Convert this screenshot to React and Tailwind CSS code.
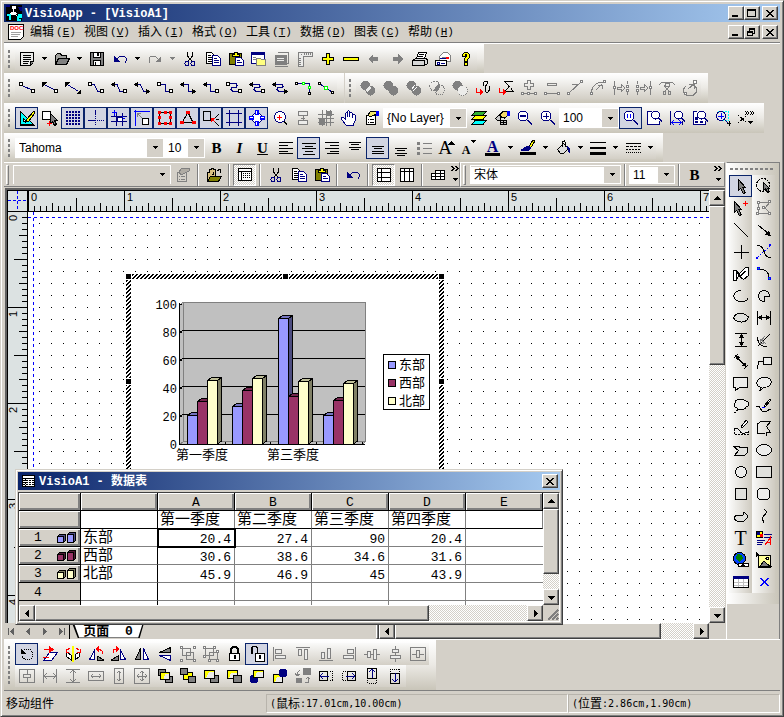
import { useState } from 'react';
import clsx from 'clsx';

const K = '#000';
const W = '#fff';
const N = '#000080';
const B = '#0000ff';
const R = '#ff0000';
const Y = '#ffff00';
const G = '#808080';
const L = '#ececea';
const C = '#00ffff';

const circle = (x, y, r) => `M${x - r} ${y}a${r} ${r} 0 1 0 ${2 * r} 0a${r} ${r} 0 1 0 ${-2 * r} 0z`;

const sqStart = ['M.5 2.5h3v3h-3z', K, W];
const sqEnd = ['M12.5 9.5h3v3h-3z', K, W];
const arrStart = ['M0 4.5l4-3v6z', 'none', K];
const arrEnd = ['M16 11.5l-4-3v6z', 'none', K];
const lens = [circle(9.5, 5, 4), N, W];
const lensArm = ['M12 8l4 4M13 8l3 3', N];

// every icon is a list of [path, stroke, fill, dash] on a 16 x 16 grid
const icons = {
  new: [['M1.5 1.5h13v9l-3 4h-10z', K, L], ['M4 4.5h8M4 6.5h8M4 8.5h8M4 10.5h6M4 12.5h5'], ['M11.5 14.5v-4h3', K, G]],
  open: [['M1.5 13.5v-9l2-2h3l1 2h5v3', K, '#a0a09c'], ['M1.5 13.5l3-6h11l-3 6z', K, G]],
  save: [['M1.5 1.5h13v13h-13z', K, G], ['M4.5 1.5h7v5h-7z', K, W], ['M4.5 9.5h7v5h-7z', K, W], ['M8 2h2v3h-2z', 'none', K], ['M6 11h1v3h-1z', 'none', K]],
  undo: [['M4 9l3-3 2-1h3l2 2v3l-1 2', N], ['M2 5v6h6z', 'none', N]],
  redo: [['M12 9l-3-3-2-1h-3l-2 2v3l1 2', G], ['M14 5v6h-6z', 'none', G]],
  cut: [['M5.5 1v4l5 6M10.5 1v4l-5 6', K], [circle(5, 12.5, 2), N], [circle(11, 12.5, 2), N]],
  copy: [['M1.5 1.5h5l3 3v8h-8z', K, W], ['M3 4.5h3M3 6.5h4M3 8.5h4M3 10.5h4'], ['M7.5 4.5h5l3 3v7h-8z', N, W], ['M9 7.5h3M9 9.5h5M9 11.5h5', N]],
  paste: [['M1.5 2.5h12v11h-12z', K, '#808000'], ['M4.5 5.5v-2h2v-2h3v2h2v2z', K, Y], ['M7.5 6.5h5l3 3v5h-8z', N, W], ['M9 9.5h3M9 11.5h5', N]],
  folderWin: [['M.5 1.5h13v11h-13z', N, W], ['M1 1h13v3h-13z', 'none', N], ['M2 6h3v1h-3zM2 8h3v1h-3z', 'none', G], ['M5.5 14.5v-7h4l1 1h4v6z', G, '#ffff80']],
  stamp: [['M3.5 1.5h11v11h-2', G], ['M1.5 4.5h11v9h-11z', G, G], ['M3 7.5h7M3 9.5h7', L], ['M1 15.5h13', G]],
  ruler: [['M1.5 15.5v-14h14v4h-9v10z', G, L], ['M4 3.5h1M7.5 2v2M9.5 2v2M11.5 2v2M13.5 2v2M2 7.5h2M2 9.5h2M2 11.5h2M2 13.5h2', G]],
  plus: [['M6.5 2.5h3v4h4v3h-4v4h-3v-4h-4v-3h4z', K, Y]],
  minus: [['M.5 6.5h15v3h-15z', K, Y]],
  left: [['M2 8l5-5v3h5v4h-5v3z', 'none', G]],
  right: [['M14 8l-5-5v3h-5v4h5v3z', 'none', G]],
  print: [['M4.5 7.5l2-6h8l-2 6z', K, W], ['M.5 9.5l3-2h11l1 2v3l-3 2h-12z', K, '#d8d8d8'], ['M.5 9.5h12v5M7 3.5h5M6 5.5h5', K]],
  mail: [['M4.5 9.5v-4l4-4h4l3 3v6h-5', G, W], ['M7 6.5h7', G], ['M11 6h3v2h-3z', 'none', R], ['M5 7.5h6', N], ['M.5 9.5h11v5h-11z', K, W], ['M2 11h2v2h-2zM6 12.5h4', N]],
  help: [['M4.5 5.5v-2l2-2h3l2 2v3l-2 2v2h-3v-3l2-2v-2h-1v2z', K, Y], ['M6.5 11.5h3v3h-3z', K, Y]],

  c1: [['M4 6l9 4', N], sqStart, sqEnd],
  c2: [['M3 5l10 5', N], ['M0 2h5l-5 5z', 'none', K], sqEnd],
  c3: [['M3 5l10 6', N], ['M0 2h5l-5 5z', 'none', K], ['M16 14v-5l-5 5z', 'none', K]],
  c4: [['M4 4.5h2l4 7h2', N], sqStart, sqEnd],
  c5: [['M4 4.5h2l3 7h3', N], arrStart, sqEnd],
  c6: [['M4 4.5h2l4 7h2', N], arrStart, arrEnd],
  c7: [['M4 4.5h4.5v7h4', N], sqStart, sqEnd],
  c8: [['M4 4.5h4.5v7h4', N], arrStart, arrEnd],
  c9: [['M4 4.5h3.5v7h5', N], arrStart, sqEnd],
  c10: [['M4 3.5h6l1 2-1 2h-4l-1 2 2 2h5', N], sqStart, sqEnd],
  c11: [['M4 4.5h6l1 2-1 1h-4l-1 2 2 2h5', N], arrStart, sqEnd],
  c12: [['M4 4.5h6l1 2-1 1h-4l-1 2 2 2h5', N], arrStart, arrEnd],
  c13: [['M2 3.5h12.5v9', N], ['M.5 2.5h2v2h-2zM13.5 12.5h2v2h-2z', K, W], ['M7.5 2.5h2v2h-2zM13.5 6.5h2v2h-2z', '#00ff00', W]],
  c14: [['M2 4l12 8', N], ['M.5 2.5h2v2h-2zM13.5 11.5h2v2h-2z', K, W], ['M6.5 6.5h3v3h-3z', '#00ff00', W]],

  xor: [[circle(5.5, 5.5, 5), 'none', G], [circle(10.5, 10.5, 5), 'none', G], ['M6 10l4-5 1 4-4 3z', 'none', L]],
  union: [[circle(5.5, 5.5, 5), 'none', G], [circle(10.5, 10.5, 5), 'none', G]],
  meet: [[circle(5.5, 5.5, 5), 'none', G], [circle(10.5, 10.5, 5), 'none', G], ['M6 9l3-4M7 11l4-4', W]],
  common: [[circle(5.5, 6, 5), G, 'none', '1 1'], [circle(10.5, 10, 5), G, 'none', '1 1'], ['M6 11v-4l3-3 2 2-1 4-3 2z', 'none', G]],
  subtract: [[circle(5.5, 5.5, 5), 'none', G], [circle(10.5, 10.5, 5), G, L, '1 1']],
  curveIn: [['M8 5.5V3l2-2h2l1 2-3 4v3l1 2h2l2-3-1-3', K], ['M1.5 8v4h4', R], ['M5 9l3 3-3 4z', 'none', R]],
  polyIn: [['M15 1.5h-8l4 5-4 5h8l-2-3', K], ['M1.5 8v4h4', R], ['M5 9l3 3-3 4z', 'none', R]],
  addPt: [['M6.5.5h3v3h3v3h-3v3h-3v-3h-3v-3h3z', G], ['M1 13.5h14', G], ['M.5 12.5h2v2h-2zM6.5 12.5h2v2h-2zM13.5 12.5h2v2h-2z', G, W]],
  delPt: [['M3.5 3.5h9v2h-9z', G], ['M1 13.5h14', G], ['M.5 12.5h2v2h-2zM13.5 12.5h2v2h-2z', G, W]],
  toLine: [['M2 13l12-11M5 4h6M8 7l3-3', G], ['M.5 12.5h2v2h-2zM13.5 .5h2v2h-2z', G, W]],
  toCurve: [['M1.5 13c0-7 5-11 12-11M6 10l6-6M8 5h4v4', G], ['M.5 12.5h2v2h-2zM13.5 .5h2v2h-2z', G, W]],
  insL: [['M1.5 1v14M14.5 1v3M14.5 12v3M4 7h4V4l4 4-4 4V9H4z', G], ['M.5 6.5h2v2h-2zM13.5 5.5h2v2h-2zM13.5 9.5h2v2h-2z', G, W]],
  insR: [['M14.5 1v14M1.5 1v3M1.5 12v3M4 7h4V4l4 4-4 4V9H4z', G], ['M13.5 6.5h2v2h-2zM.5 5.5h2v2h-2zM.5 9.5h2v2h-2z', G, W]],
  trim: [['M0 4.5l3-2h10l3 2M5 5.5l5 6M11 5.5l-5 6M6 3h4v3h-4z', G], [circle(5.5, 13, 1.5), G], [circle(10.5, 13, 1.5), G]],
  closeShape: [['M4 6L1.5 9v3l3 3h7l3-3V8l-3-3M7 4h5v5M6 9l6-5', G], ['M11.5 .5h3v3h-3zM2.5 12.5h2v2h-2z', G, W]],

  design: [['M1.5 1.5v13h13z', K, C], ['M4.5 8.5v3h3z', K, W], ['M15 1l-7 8-1 3 3-1 6-8z', K, Y], ['M1 15.5h15', K]],
  pick: [['M.5 1.5h8v8h-8z', K, W], ['M8.5 3.5v10l2-2 2 4 2-1-2-4h3z', K, G], ['M5 13.5h5M7.5 11v5', R]],
  grid: [[[1, 4, 7, 10, 13].map((y) => `M1 ${y + 0.5}h14M1 ${y + 1.5}h14`).join(''), N, 'none', '2 1']],
  origin: [['M7 10.5h9M7.5 4v12', N, 'none', '1 1'], ['M0 10.5h7M7.5 0v4', N]],
  snapGrid: [['M0 6.5h16M0 11.5h16M5.5 3v13M11.5 3v13', N], ['M3.5 0v6M1 2.5h5M11.5 6v4M9 8.5h5', B], ['M6 7h5v4h-5z', N, W]],
  guide: [['M0 1.5h16M1.5 0v16', B], ['M3 3l5 5M3 7V3h4', G], ['M8.5 8.5h6v6h-6z', K, W]],
  redBox: [['M2.5 2.5h11v11h-11z', K, 'none'], ['M1 1h3v3h-3zM7 1h3v3h-3zM12 1h3v3h-3zM1 6h3v3h-3zM12 6h3v3h-3zM1 12h3v3h-3zM7 12h3v3h-3zM12 12h3v3h-3z', 'none', R]],
  redTri: [['M8 2.5l5 10h-11z', K, 'none'], ['M6 1h4v3h-4zM0 11h4v3h-4zM12 11h4v3h-4z', 'none', R]],
  boxHit: [['M.5 1.5h7v9h-7z', K], ['M16 4l-4 4M13 9h3M12 12l4 4', K], ['M8 8h4l-4 4z', 'none', R], ['M8 8l4 4', R]],
  frame: [['M0 3.5h16M0 12.5h16M3.5 0v16M12.5 0v16', N]],
  target: [[circle(8, 8, 5), N, W], ['M6.5 .5h3v4h-3zM6.5 11.5h3v4h-3zM.5 6.5h4v3h-4zM11.5 6.5h4v3h-4z', B, W], ['M8 0v4M8 12v4M0 8h4M12 8h4', B]],
  lensRed: [[circle(8, 7, 5.5), N, W], ['M5 7.5h5M7.5 5v5', R], ['M12 11l3 4', K]],
  treeG: [['M3.5 1.5h9v4h-9zM3.5 10.5h9v4h-9zM8 5v5M6 8h4', G, L]],
  gridG: [['M0 4.5h16M0 8.5h16M0 12.5h16M4.5 0v16M8.5 0v16M12.5 0v16', G], ['M1 9h6v6h-6zM9 1h5v5h-5z', 'none', G]],
  hand: [['M5.5 15.5l-5-6v-2h2l2 2v-6l1-1 1 1v-2l1-1 1 1v1h2l1 1v2l1-1h1l1 1v5l-2 3v2z', N, W], ['M6.5 3v4M8.5 2v5M11.5 5v3', N]],
  props: [['M2.5 5.5h9v9h-9z', K, W], ['M4 9.5h1M6 9.5h4M4 12.5h1M6 12.5h4', K], ['M4 5l3-4h5v3l-4 2-2 1z', K, '#f4e96c'], ['M12 1h3v5h-3z', 'none', B]],
  propsG: [['M2.5 5.5h9v9h-9z', G], ['M4 9.5h1M6 9.5h4M4 12.5h1M6 12.5h4', G], ['M4 5l3-4h7v3l-6 3-2 1z', G, '#b0aca4']],
  layers: [['M1 14.5l3-4h11l-3 4z', K, C], ['M1 9.5l3-4h11l-3 4z', K, Y], ['M1 5.5l3-4h11l-3 4z', K, '#30b030']],
  layerProps: [['M4.5 6l5-5h5v4l-4 3z', K, '#f4d96c'], ['M13 1h3v5h-3z', 'none', B], ['M1.5 8.5l3-3h2v5h-3zM6.5 10.5h6v4h-6z', K, '#c8c8c8'], ['M9.5 11v3M7 12.5h5', K]],
  zoomOut: [[circle(6, 6, 5), N, W], ['M10 10l5 5M11 10l4 4', N], ['M3.5 5.5h5v1h-5z', N]],
  zoomIn: [[circle(6, 6, 5), N, W], ['M10 10l5 5M11 10l4 4', N], ['M3 6h6M6 3v6M3 6.5h6M6.5 3v6', N]],
  zoomReal: [[circle(6, 6, 5), N, W], ['M10 10l5 5M11 10l4 4', N], ['M4.5 4v4M7.5 4v4', B]],
  zoomPage: [['M1.5 1.5h10l2 3v10h-12z', 'none', W], ['M6 1.5H1.5v13h12v-4', N], lens, lensArm],
  zoomWidth: [['M1.5 1v14M13.5 11v4', N], lens, ['M3 12.5h9M5 10l-2 2.500 2 2.500M10 10l2 2.500-2 2.500', B], lensArm],
  zoomSel: [['M5 1.5H1.5v13h12v-4', N, W], lens, ['M3.5 7.5h2v2h-2zM3.5 11.5h2v1h-2zM8.5 11.5h2v1h-2z', N, N], lensArm],
  zoomArea: [['M3.5 1.5h10v9h-10z', C, 'none', '2 1'], [circle(6, 6, 4.5), N, L], ['M3 6.5h6M6.5 3v6', B], ['M10 10l4 4', N], ['M12 13.5h4M14 11v5', K]],

  alignL: [['M1 2.5h14M1 5.5h9M1 8.5h14M1 11.5h9M1 13.5h14']],
  alignC: [['M1 3.5h14M4 6.5h8M1 8.5h14M4 11.5h8M2 14.5h12']],
  alignR: [['M1 2.5h14M6 5.5h9M1 8.5h14M6 11.5h9M3 13.5h12']],
  vTop: [['M2 2.5h12M4 4.5h8M2 7.5h12M4 9.5h8']],
  vMid: [['M2 6.5h12M4 8.5h8M2 11.5h12M2 13.5h12']],
  vBot: [['M2 8.5h12M4 10.5h8M2 13.5h12M4 15.5h8']],
  bullets: [['M7 3.5h9M7 8.5h9M7 13.5h9', G], ['M1 2h3v3h-3zM1 7h3v3h-3zM1 12h3v3h-3z', 'none', G]],
  pen: [['M0 12h16v3h-16z', 'none', K], ['M13 0l2 1-5 8-2-1z', K, Y], ['M8 6l3 2-3 3-7-1z', N, N]],
  bucket: [['M2.5 9.5l6-6 5 5-5 5h-3z', K, '#dcdcdc'], ['M7.5 7V2l2-1 1 2v4', K], ['M12 6l3 3v5l-2-3z', 'none', N]],
  lineW: [['M0 2h16v1h-16zM0 7h16v2h-16zM0 12h16v3h-16z', 'none', K]],
  dashes: [['M1 3.5h15', K], ['M1 6.5h15', K, 'none', '3 1'], ['M1 9.5h15', K, 'none', '2 1'], ['M1 12.5h15', K, 'none', '1 1']],

  import: [['M1.5 14.5v-9h2v-3h2v-1h2v1h2v7', K, '#d8c080'], ['M1.5 14.5l3-5h11l-3 5z', K, '#808000'], ['M11 3.5l3-1 1 3M6 7h1v-2', K]],
  sheet: [['M1.5 1.5h13v12h-13z', K, W], ['M1 4.5h14M4.5 4v10', K], ['M6 6.5h8M6 8.5h8M6 10.5h8', K, 'none', '1 1']],
  rows: [['M1.5 1.5h13v13h-13z', K, W], ['M5.5 1v14M1 5.5h14M1 10.5h14']],
  cols: [['M1.5 1.5h13v13h-13z', K, W], ['M1 4.5h14M5.5 1v14M10.5 1v14']],
  gridSm: [['M5.5 3.5h9v9h-13v-6h4z', K, W], ['M1 9.5h13M5 6.5h9M5.5 3v10M10.5 3v10']],

  select: [['M5.5 1.5v11l2-2 3 5 2-1-3-5h3z', K, G]],
  lasso: [[circle(7, 7, 6.5), K, 'none', '2 1'], ['M7.5 4.5v8l2-2 2 4 2-1-2-3h2z', K, G]],
  selectAdd: [['M1.5 1.5v11l2-2 3 5 2-1-3-5h3z', K, G], ['M10 3h5v1h-5zM12 1h1v5h-1z', 'none', R]],
  editPts: [['M2 3l12-1-5 6 5 5-12 1 1-6z', G], ['M1.5 1.5h2v2h-2zM12.5 .5h2v2h-2zM12.5 12.5h2v2h-2zM.5 12.5h2v2h-2zM6.5 6.5h2v2h-2zM1.5 7.5h2v2h-2z', G, W]],
  line: [['M1 1l14 14', K]],
  arrow: [['M2 3l11 9', K], ['M15 14l-6-1 4-5z', 'none', K]],
  cross: [['M8.5 1v14M1 8.5h15', K]],
  bezier: [['M1 1c9 0 5 13 14 13', K], ['M2 13l12-11', B, 'none', '1 2'], ['M0 13h2v2h-2zM13 0h2v2h-2z', 'none', B]],
  polyBand: [['M.5 14.5v-10h3l3 3 6-6h3v8l-5 4-5-4-2 5z', K, W], ['M3.5 14V6l4 4 5-5', K]],
  arc: [['M3 3c7 0 10 3 10 9', K], ['M1.5 1.5h2v2h-2zM12.5 11.5h2v2h-2z', B, '#00ff00']],
  openArc: [['M8 2.500C-2 2.500-1 13 7 13.500s7-2 8-3', K]],
  pie: [['M8 8h5.500a5.500 5.500 0 1 0-5.500 5.500z', K, '#e0e0dc']],
  blob: [['M.5 8c2-6 10-6 15-1-1 6-11 7-15 1z', K, '#e0e0dc']],
  dimH: [['M1.5 1v14M14.5 1v14M2 7.5h12', K], ['M2 7.5l4-3v6zM14 7.5l-4-3v6z', 'none', K]],
  dimV: [['M2 1.5h12M2 14.5h12M8.5 2v12', K], ['M8.5 2l-3 4h6zM8.5 14l-3-4h6z', 'none', K]],
  angle: [['M1.500 5c0 6 3 9 9 10M2 14l12-12', K], ['M4 7l6 5M9 4l-5 6M4 7v4h4', G]],
  dimD: [['M1 4l4-4M11 15l4-4M3 3l10 9', K], ['M2 1l5 2-3 3zM14 13l-5-1 3-4z', 'none', K]],
  leader: [['M7.5 3.5h8v7h-8z', K, L], ['M7 7.5h-4l-2 7', K]],
  callout: [['M.5 1.5h14v10h-8l-4 3v-3h-2z', K, L]],
  calloutR: [['M5 11.500c-6-2-6-9 3-10s10 9 0 10l-4 3z', K, L]],
  cloud: [['M4 10a3 3 0 0 1-2-5a3 3 0 0 1 4-3a4 3 0 0 1 6 1a3 3 0 0 1 1 6a3 3 0 0 1-4 2a3 3 0 0 1-5-1z', K, L], ['M3 12h2M1 14h2', K]],
  brush: [['M0 9c5-3 4 5 8 5s4-3 7-3', K], ['M14 1l-6 7 1 1 6-7z', K, W], ['M6 9h3', B]],
  brushFill: [['M1 9v5.500h14v-4', K, L, '2 1'], ['M1 9c5-3 5 3 8 4s4-1 6-1', K], ['M13 0l-5 7 1 1 6-6z', K, W]],
  polyOpen: [['M9 13H1.5v-9l3-2.500h10l-4 5 4 6h-4v3', K]],
  ribbon: [['M.5 4.5h5l2 1h7v5l-3 3h-10l4-5z', K, '#e0e0dc']],
  ellipse: [['M.5 8a7.500 5.500 0 1 0 15 0a7.500 5.500 0 1 0-15 0z', K, L]],
  circ: [[circle(8, 8, 5.5), K, L]],
  rect: [['M.5 2.5h15v11h-15z', K, '#e0e0dc']],
  square: [['M2.5 2.5h11v11h-11z', K, '#e0e0dc']],
  rrect: [['M3.5 2.5h8l2 2v7l-2 2h-8l-2-2v-7z', K, L]],
  fish: [['M10 7l1-3 3 3v3l-3 3h-7l-3-2v-2l3-2z', K, '#e0e0dc']],
  sCurve: [['M8 1l3 3-5 6 2 5', K]],
  picText: [['M.5 1.5h6v6h-6z', K, Y], ['M1 2h3v3h-3z', 'none', N], ['M4 4h3v3h-3z', 'none', R], ['M8 4.5h8M8 7.5h8M1 10.5h8M1 12.5h6M1 14.5h5', N], ['M9 15l5-7v7M10 12.5h4', R]],
  globe: [[circle(6.5, 6.5, 6), K, '#0040ff'], ['M4 2l5 1 1 4-4 3-3-3z', 'none', '#008000'], ['M5.5 11.5h4v3h-4zM10.5 11.5h5v3h-5zM8 13h4', K, W]],
  picture: [['M2.5 3.5h12v12h-12z', K, '#ffff99'], ['M4 14l4-5 3 3 3 2z', K, G], [circle(11.5, 6.5, 1.5), K, W], ['M0 0v5l3-2z', 'none', K]],
  table: [['M.5 2.5h15v11h-15z', K, W], ['M0 2h16v3h-16z', 'none', N], ['M1 8h14M1 11h14M5.5 5v8M10.5 5v8', '#c0c0c0']],
  del: [['M4 4l8 8M5 4l8 8M12 4l-8 8M13 4l-8 8', B]],

  rotate: [[circle(8.5, 8.5, 5.5), K, 'none', '1 1'], ['M2 2v6h5z', 'none', K]],
  skew: [['M1.5 14.5l6-8h8l-6 8z', N, W], ['M2 3.5h6M1 11h6', R], ['M7 0l5 3.5-5 3.5z', 'none', R]],
  flipRot: [['M7 0h2v16h-2z', 'none', Y], ['M6 9l-4-3-1 4 5 4zM10 9l4-3 1 4-5 4z', K, W], ['M5 2L2 4M11 2l3 2M1 3v3h3M15 3v3h-3', R]],
  rotL: [['M1.5 13.5l5-9v9z', N, W], ['M9 14l7 0-7-4z', K, G], ['M14 8V5l-3-2', R], ['M7 3l4-3v6z', 'none', R]],
  rotR: [['M14.5 13.5l-5-9v9z', N, W], ['M7 14H0l7-4z', K, G], ['M2 7V4l3-1', R], ['M9 3L5 0v6z', 'none', R]],
  flipH: [['M1.5 13.5l5-11v11z', K, G], ['M14.5 13.5l-5-11v11z', N, W]],
  flipV: [['M13.5 1.5v5h-11z', K, G], ['M13.5 14.5v-5h-11z', N, W]],
  group: [['M2.5 2.5h8v7h-8zM6.5 6.5h7v7h-7z', G], ['M.5 .5h2v2h-2zM13.5 .5h2v2h-2zM.5 13.5h2v2h-2zM13.5 13.5h2v2h-2z', G, W]],
  ungroup: [['M2.5 2.5h8v7h-8zM6.5 6.5h8v7h-8z', G], ['M.5 .5h2v2h-2zM10.5 .5h2v2h-2zM.5 9.5h2v2h-2zM13.5 4.5h2v2h-2zM5.5 13.5h2v2h-2zM13.5 13.5h2v2h-2z', G, W]],
  lock: [['M5.5 7V3l2-2h2l2 2v4M4.5 7V2.5l2-2h4l2 2V7', K], ['M3.5 7.5h10v7h-10z', K, W], ['M8 9h2v4h-2z', 'none', K]],
  unlock: [['M2.5 8V2l2-2h2l2 2v5M3.500 8V2', K], ['M6.5 7.5h9v8h-9z', K, W], ['M10 9h2v4h-2z', 'none', K]],
  aL: [['M1.5 1v14', G], ['M3.5 3.5h6v4h-6zM3.5 9.5h10v3h-10z', G, L]],
  aT: [['M1 1.5h14', G], ['M3.5 3.5h3v6h-3zM9.5 3.5h3v10h-3z', G, L]],
  aB: [['M1 14.5h14', G], ['M3.5 6.5h3v6h-3zM9.5 2.5h3v10h-3z', G, L]],
  aR: [['M14.5 1v14', G], ['M6.5 3.5h6v4h-6zM2.5 9.5h10v3h-10z', G, L]],
  aM: [['M0 8.5h16', G], ['M3.5 5.5h3v6h-3zM9.5 3.5h3v10h-3z', G, L]],
  aC: [['M8.5 0v16', G], ['M5.5 3.5h6v3h-6zM3.5 9.5h10v3h-10z', G, L]],
  cH: [['M.5 1.5h15v13h-15z', G], ['M6.5 4.5h3v7h-3zM2 8h4M10 8h4', G]],
  cV: [['M.5 1.5h15v13h-15z', G], ['M4.5 6.5h7v3h-7zM8 2v4M8 10v4', G]],
  spH: [['M1.5 1v14M14.5 1v14M2 8h12M5 5L2 8l3 3M11 5l3 3-3 3', G]],
  spV: [['M1 1.5h14M1 14.5h14M8 2v12M5 5l3-3 3 3M5 11l3 3 3-3', G]],
  sameW: [['M.5 3.5h15v9h-15zM3 8h10M5 6L3 8l2 2M11 6l2 2-2 2', G]],
  sameH: [['M3.5 .5h9v15h-9zM8 3v10M6 5l2-2 2 2M6 11l2 2 2-2', G]],
  sameWH: [['M.5 .5h15v15h-15zM3 8h10M8 3v10M5 6L3 8l2 2M11 6l2 2-2 2M6 5l2-2 2 2M6 11l2 2 2-2', G]],
  front: [['M1.5 1.5h7v6h-7z', K, G], ['M8.5 8.5h7v6h-7z', K, G], ['M3.5 4.5h9v7h-9z', K, Y], ['M8 6h4v5h-5z', 'none', L]],
  back: [['M3.5 4.5h9v7h-9z', K, Y], ['M.5 .5h7v6h-7zM8.5 8.5h7v6h-7z', K, G]],
  fwd: [['M7.5 7.5h8v7h-8z', K, G], ['M1.5 2.5h10v8h-10z', K, Y], ['M6 4h5v6h-8z', 'none', L]],
  bwd: [['M1.5 2.5h10v8h-10z', K, Y], ['M5 5h6v5h-8z', 'none', L], ['M7.5 7.5h8v7h-8z', K, G]],
  over: [[circle(5, 11, 4.5), 'none', N], ['M4.5 2.5h10v7h-10z', K, Y], ['M8 4h6v5h-8z', 'none', L]],
  under: [['M1.5 6.5h9v8h-9z', K, Y], ['M5 9h5v5h-7z', 'none', L], [circle(11, 5, 4.5), 'none', N]],
  swap: [['M8 0h8v7h-8zM1 10h6v5h-6z', 'none', G], ['M5 2L2 5v3M0 5l2 3 3-2M10 14h3v-5M11 11l2-2 2 2', G]],
  nL: [['M1.5 3.5h8v9h-8z', K], ['M2 8.5h9M5 5L2 8l3 3', N], ['M11.5 3.5h3v9h-3', K, 'none', '1 1']],
  nR: [['M6.5 3.5h8v9h-8z', K], ['M5 8.5h9M11 5l3 3-3 3', N], ['M4.5 3.5h-3v9h3', K, 'none', '1 1']],
  nU: [['M3.5 .5h9v10h-9z', K], ['M8.5 1v9M5 4l3-3 3 3', N], ['M3.5 12v3h9v-3', K, 'none', '1 1']],
  nD: [['M3.5 5.5h9v10h-9z', K], ['M8.5 5v9M5 11l3 3 3-3', N], ['M3.5 4V1h9v3', K, 'none', '1 1']],
};

// buttons whose face is a letter
const glyphs = {
  bold: <span className="font-['Liberation_Serif'] text-[15px] font-black leading-4">B</span>,
  italic: <span className="font-['Liberation_Serif'] text-[15px] font-bold italic leading-4">I</span>,
  underline: <span className="font-['Liberation_Serif'] text-[15px] font-bold leading-4 underline">U</span>,
  grow: <span className="flex font-['Liberation_Serif'] text-[19px] leading-4">A<Caret dir="up" className="-ml-1" /></span>,
  shrink: <span className="flex pt-1 font-['Liberation_Serif'] text-[12px] font-bold leading-4">A<Caret dir="small" className="-mt-1" /></span>,
  fontColor: <span className="border-b-[3px] border-black px-0.5 font-['Liberation_Serif'] text-[16px] font-bold leading-[13px] text-[#000080]">A</span>,
  textTool: <span className="font-['Liberation_Serif'] text-[20px] leading-4">T</span>,
};

function Caret({ dir = 'down', className }) {
  return (
    <svg width="7" height="7" viewBox="0 0 7 7" shapeRendering="crispEdges" className={className} fill="currentColor">
      {dir === 'down' && <path d="M0 2h7l-3.500 4z" />}
      {dir === 'small' && <path d="M1 2h5l-2.500 3z" />}
      {dir === 'up' && <path d="M0 5h7L3.500 1z" />}
      {dir === 'left' && <path d="M5 0v7L1 3.500z" />}
      {dir === 'right' && <path d="M2 0v7l4-3.500z" />}
    </svg>
  );
}

const Icon = ({ name, size = 16 }) => (
  <svg width={size} height={size} viewBox="0 0 16 16" fill="none" shapeRendering="crispEdges" className="shrink-0">
    {icons[name].map(([d, stroke = 'currentColor', fill = 'none', dash], i) => (
      <path key={i} d={d} stroke={stroke} fill={fill} strokeDasharray={dash} />
    ))}
  </svg>
);

const ToolButton = ({ name, pressed, flat }) => (
  <button
    type="button"
    aria-label={name}
    aria-pressed={!!pressed}
    className={clsx(
      'flex h-[22px] w-[23px] shrink-0 items-center justify-center',
      pressed && !flat && 'border border-[#0a246a] bg-[#d2d5e2]',
      pressed && flat && 'border border-t-[#808080] border-l-[#808080] border-r-white border-b-white bg-[conic-gradient(#fff_25%,#d4d0c8_0_50%,#fff_0_75%,#d4d0c8_0)] bg-[length:2px_2px]'
    )}
  >
    {glyphs[name] || <Icon name={name} />}
  </button>
);

const DropButton = ({ gray }) => (
  <button type="button" aria-label="more" className={clsx('flex h-[22px] w-3 shrink-0 items-center justify-center', gray && 'text-[#808080]')}>
    <Caret dir="small" />
  </button>
);

const Combo = ({ label, value, width, flat }) => (
  <div className={clsx('relative shrink-0 border', width, flat ? 'h-[19px] border-white' : 'h-5 border-white bg-white')}>
    <select
      aria-label={label}
      className={clsx(
        "h-full w-full appearance-none pl-[3px] font-['Liberation_Sans','Noto_Sans_CJK_SC',sans-serif] text-[12px] leading-4 outline-none",
        flat && !value ? 'bg-[#d4d0c8]' : 'bg-white'
      )}
    >
      <option>{value}</option>
    </select>
    <span className="pointer-events-none absolute top-0 right-0 flex h-full w-4 items-center justify-center bg-[#d4d0c8]">
      <Caret dir="small" />
    </span>
  </div>
);

const Grip = () => (
  <span className="mx-1 h-[18px] w-[3px] shrink-0 bg-[linear-gradient(#808080_3px,transparent_0)] bg-[length:2px_5px] bg-repeat-y" />
);

const Toolbar = ({ height = 'h-[30px]', label, children }) => (
  <div role="toolbar" aria-label={label} className={clsx('flex shrink-0 items-center bg-linear-to-b from-white via-[#ebe9e4] to-[#c9c5b9] pr-[7px]', height)}>
    <Grip />
    <div className="flex h-[22px] items-center bg-linear-to-b from-[#fafaf9] to-[#d3cfc6]">{children}</div>
  </div>
);

const many = (names, pressed = []) => names.map((n) => <ToolButton key={n} name={n} pressed={pressed.includes(n)} />);

const bevel = 'border border-t-white border-l-white border-r-[#404040] border-b-[#404040] bg-[#d4d0c8] shadow-[inset_-1px_-1px_#808080]';
const dither = 'bg-[conic-gradient(#fff_25%,#d4d0c8_0_50%,#fff_0_75%,#d4d0c8_0)] bg-[length:2px_2px]';

const WinButton = ({ kind }) => (
  <button type="button" aria-label={kind} className={clsx('flex h-[14px] w-4 items-center justify-center', bevel)}>
    <svg width="10" height="9" viewBox="0 0 10 9" stroke="#000" fill="none" shapeRendering="crispEdges">
      {kind === 'minimize' && <path d="M1 7h6" strokeWidth="2" />}
      {kind === 'maximize' && <path d="M.5 .5h8v7h-8zM0 1.500h9" />}
      {kind === 'restore' && <path d="M2.500 3V.5h5v5H6M2 1.500h6M.5 3.500h5v4h-5zM0 4.500h6" />}
      {kind === 'close' && <path d="M1 1l7 7M2 1l7 7M8 1L1 8M9 1L2 8" />}
    </svg>
  </button>
);

const ScrollButton = ({ dir }) => (
  <button type="button" aria-label={`scroll ${dir}`} className={clsx('flex size-4 shrink-0 items-center justify-center', bevel)}>
    <Caret dir={dir} />
  </button>
);

const TitleBar = ({ icon, title, children }) => (
  <div className="flex h-[18px] shrink-0 items-center bg-linear-to-r/srgb from-[#0a246a] to-[#a6caf0] pr-0.5 pl-0.5">
    {icon}
    <h1 className="flex-1 pt-0.5 pl-[3px] font-['Liberation_Mono','Noto_Sans_CJK_SC',monospace] text-[12px] leading-4 font-bold whitespace-nowrap text-white">{title}</h1>
    {children}
  </div>
);

const menus = [['编辑', 'E'], ['视图', 'V'], ['插入', 'I'], ['格式', 'O'], ['工具', 'T'], ['数据', 'D'], ['图表', 'C'], ['帮助', 'H']];

const MenuBar = () => (
  <nav className="flex h-5 shrink-0 items-center pr-0.5">
    <svg width="16" height="16" viewBox="0 0 16 16" className="mr-1 ml-1 shrink-0" shapeRendering="crispEdges">
      <path d="M.5 .5h15v12l-3 3h-12z" fill="#fff" stroke="#000" />
      <path d="M3 8.500h10M3 10.500h9M3 12.500h7" stroke="#a0a0a0" />
      <text x="2" y="6" fontSize="6" fontWeight="bold" fontFamily="Liberation Sans" fill="#f00">DOC</text>
    </svg>
    {menus.map(([name, key]) => (
      <button key={key} type="button" className="flex h-[18px] w-[54px] items-center pl-[2px] whitespace-nowrap">
        {name}
        <span className="pl-0.5 font-['Liberation_Mono',monospace] text-[11px]">(<u>{key}</u>)</span>
      </button>
    ))}
    <span className="flex-1" />
    <WinButton kind="minimize" />
    <WinButton kind="restore" />
    <span className="w-0.5" />
    <WinButton kind="close" />
  </nav>
);

const Sep = () => <span className="mx-[3px] h-[22px] w-0.5 shrink-0 border-l border-l-[#808080] bg-white" />;
const FlatGrip = () => <span className="mr-1 ml-0.5 h-5 w-[3px] shrink-0 border border-t-white border-l-white border-r-[#808080] border-b-[#808080]" />;
const More = () => (
  <button type="button" aria-label="more buttons" className="flex h-[22px] w-3 shrink-0 flex-col items-center justify-center gap-1">
    <svg width="8" height="6" viewBox="0 0 8 6" stroke="#000" fill="none" shapeRendering="crispEdges">
      <path d="M0 0l2.500 2.500L0 5M1 0l2.500 2.500L1 5M4 0l2.500 2.500L4 5M5 0l2.500 2.500L5 5" />
    </svg>
    <Caret dir="small" />
  </button>
);

const FlatBar = () => (
  <div className="flex h-[25px] shrink-0">
    <div className="flex w-[456px] items-center border-t border-r border-b border-t-white border-r-[#808080] border-b-[#808080]">
      <FlatGrip />
      <Combo label="对象" value="" width="w-[158px]" flat />
      <ToolButton name="propsG" />
      <Sep />
      <ToolButton name="import" />
      <Sep />
      <ToolButton name="sheet" pressed flat />
      <Sep />
      {many(['cut', 'copy', 'paste'])}
      <Sep />
      <ToolButton name="undo" />
      <Sep />
      <ToolButton name="rows" pressed flat />
      <ToolButton name="cols" />
      <Sep />
      <ToolButton name="gridSm" />
      <span className="flex-1" />
      <More />
    </div>
    <div className="flex min-w-0 flex-1 items-center border border-t-white border-l-white border-r-[#808080] border-b-[#808080]">
      <FlatGrip />
      <Combo label="字体" value="宋体" width="w-[151px]" flat />
      <Sep />
      <Combo label="字号" value="11" width="w-[46px]" flat />
      <Sep />
      <ToolButton name="bold" />
      <span className="flex-1" />
      <More />
    </div>
  </div>
);

// 96 px per inch, sixteen divisions
const tickLength = (i) => (i % 16 === 0 ? 21 : i % 8 === 0 ? 13 : i % 4 === 0 ? 8 : 5);
const range = (n) => Array.from({ length: n }, (_, i) => i);
const inchesAcross = () => Math.ceil((window.innerWidth - 100) / 96);
const inchesDown = () => Math.ceil((window.innerHeight - 310) / 96);

const RulerH = () => (
  <svg width="100%" height="22" className="block bg-[#dce2e2]" shapeRendering="crispEdges">
    <path d={range(inchesAcross() * 16).map((i) => `M${i * 6 + 0.5} 21v-${tickLength(i)}`).join('')} stroke="#000" />
    <path d="M0 .5h4000M0 21.500h4000" stroke="#000" />
    {range(inchesAcross()).map((n) => (
      <text key={n} x={n * 96 + 3} y="11" fontSize="11" fontFamily="Liberation Sans">{n}</text>
    ))}
  </svg>
);

const RulerV = () => (
  <svg width="21" height="100%" className="absolute inset-0 bg-[#dce2e2]" shapeRendering="crispEdges">
    <path d={range(inchesDown() * 16).map((i) => `M20 ${i * 6 - 0.5}h-${tickLength(i)}`).join('')} stroke="#000" />
    <path d="M.5 0v4000M20.500 0v4000" stroke="#000" />
    {range(inchesDown()).map((n) => (
      <text key={n} transform={`translate(10 ${n * 96 + 9}) rotate(-90)`} fontSize="11" fontFamily="Liberation Sans">{n}</text>
    ))}
  </svg>
);

const series = [
  { name: '东部', color: '#9999ff', side: '#4d4d80', top: '#7373bf', values: ['20.4', '27.4', '90', '20.4'] },
  { name: '西部', color: '#993366', side: '#4d1a33', top: '#73264d', values: ['30.6', '38.6', '34.6', '31.6'] },
  { name: '北部', color: '#ffffcc', side: '#808066', top: '#bfbf99', values: ['45.9', '46.9', '45', '43.9'] },
];
const quarters = ['第一季度', '第二季度', '第三季度', '第四季度'];
const groupX = [61, 106, 152, 197];

const Chart = () => (
  <svg width="318" height="215" viewBox="0 0 318 215" shapeRendering="crispEdges" className="absolute top-[62px] left-[98px]">
    <defs>
      <pattern id="hatch" width="4" height="4" patternUnits="userSpaceOnUse">
        <rect width="4" height="4" fill="#fff" />
        <path d="M2 0h2v1H2zM1 1h2v1H1zM0 2h2v1H0zM0 3h1v1H0zM3 3h1v1H3z" fill="#000" />
      </pattern>
    </defs>
    <rect width="318" height="215" fill="url(#hatch)" />
    <rect x="5" y="5" width="308" height="205" fill="#fff" />
    {[[0, 0], [157, 0], [313, 0], [0, 105], [313, 105], [0, 210], [157, 210], [313, 210]].map(([x, y]) => (
      <g key={`${x}-${y}`}>
        <rect x={x - 1} y={y - 1} width="7" height="7" fill="#fff" />
        <rect x={x} y={y} width="5" height="5" fill="#000" />
      </g>
    ))}

    {/* walls and floor */}
    <path d="M53.500 170.500v-139l3-3h183v139l-3 3z" fill="#c0c0c0" stroke="#808080" />
    <path d="M57.500 28v139h182M57.500 167.500l-4 3" stroke="#808080" fill="none" />
    {[20, 40, 60, 80].map((v) => (
      <path key={v} d={`M53 ${170.5 - v * 1.4}l4-2h182`} stroke="#000" fill="none" />
    ))}
    <path d="M53.500 29v141.500h185" stroke="#000" fill="none" />
    {[0, 20, 40, 60, 80, 100].map((v) => (
      <g key={v}>
        <path d={`M53 ${170.5 - v * 1.4}h3`} stroke="#000" />
        <text x="51" y={175 - v * 1.4} textAnchor="end" fontSize="12" fontFamily="Liberation Mono">{v}</text>
      </g>
    ))}
    <path d="M99.500 168v3M144.500 168v3M190.500 168v3M236.500 168v3" stroke="#000" />

    {groupX.map((gx, q) =>
      series.map((s, i) => {
        const h = Math.round(Number(s.values[q]) * 1.4);
        const x = gx + i * 10 + 0.5;
        const y = 170.5 - h;
        return (
          <g key={s.name + q} stroke="#000">
            <path d={`M${x} ${y}l4-3h10l-4 3z`} fill={s.top} />
            <path d={`M${x + 10} ${y}l4-3V167l-4 3z`} fill={s.side} />
            <path d={`M${x} ${y}h10v${h}h-10z`} fill={s.color} />
          </g>
        );
      })
    )}
    <g fontSize="13" fontFamily="Noto Sans CJK SC">
      <text x="50" y="185">{quarters[0]}</text>
      <text x="141" y="185">{quarters[2]}</text>
    </g>

    {/* legend */}
    <rect x="257.500" y="80.500" width="46" height="55" fill="#fff" stroke="#000" />
    {series.map((s, i) => (
      <g key={s.name}>
        <rect x="262.500" y={87.5 + i * 18} width="7" height="7" fill={s.color} stroke="#000" />
        <text x="273" y={95 + i * 18} fontSize="13" fontFamily="Noto Sans CJK SC">{s.name}</text>
      </g>
    ))}
  </svg>
);

const SeriesMark = ({ s }) => (
  <svg width="20" height="12" viewBox="0 0 20 12" stroke="#000" shapeRendering="crispEdges" className="shrink-0">
    <path d="M.5 4.500l2-2h6v6l-2 2h-6zM10.500 2.500l2-2h6v8l-2 2h-6z" fill={s.side} />
    <path d="M.5 4.500h6v6h-6zM10.500 2.500h6v8h-6z" fill={s.color} />
  </svg>
);

const headCell = 'h-[18px] border-r border-b border-black bg-[#d4d0c8] p-0 align-top font-normal shadow-[inset_1px_1px_#fff,inset_-2px_-2px_#808080]';

const DataSheet = () => {
  const [active, setActive] = useState('0-0');
  return (
    <section className="absolute top-[307px] left-[11px] w-[548px] border border-t-[#d4d0c8] border-l-[#d4d0c8] border-r-[#404040] border-b-[#404040] bg-[#d4d0c8] p-0.5 shadow-[inset_1px_1px_#fff,inset_-1px_-1px_#808080]">
      <TitleBar
        title="VisioA1 - 数据表"
        icon={
          <svg width="16" height="14" viewBox="0 0 16 14" shapeRendering="crispEdges">
            <path d="M2.500 1.500h12v11h-12z" fill="#fff" stroke="#000" />
            <path d="M3 4.500h12" stroke="#000" />
            <path d="M3 6.500h11M3 8.500h11M3 10.500h11M5.500 5v8" stroke="#000" strokeDasharray="2 1" />
          </svg>
        }
      >
        <WinButton kind="close" />
      </TitleBar>
      <div className="mt-0.5 border border-t-[#404040] border-l-[#404040] border-r-white border-b-white">
        <div className="flex h-28">
          <div className="min-w-0 flex-1 overflow-hidden bg-white font-['Liberation_Mono','Noto_Sans_CJK_SC',monospace] text-[13px]">
            <table className="w-full table-fixed border-separate border-spacing-0">
              <colgroup>
                <col className="w-[62px]" />
                <col className="w-[77px]" />
                <col className="w-[77px]" />
                <col className="w-[77px]" />
                <col className="w-[77px]" />
                <col className="w-[77px]" />
                <col />
              </colgroup>
              <thead>
                <tr>
                  {['', '', 'A', 'B', 'C', 'D', 'E'].map((c, i) => (
                    <th key={i} className={headCell}><div className="h-[17px] leading-[20px]">{c}</div></th>
                  ))}
                </tr>
                <tr>
                  <th className={headCell} />
                  {['', ...quarters, ''].map((q, i) => (
                    <th key={i} className={clsx('h-[18px] border-r border-b border-b-black p-0 text-left align-top text-[15px] font-normal', i === 0 ? 'border-r-black' : 'border-r-[#808080]')}>
                      <div className="h-[17px] pl-0.5 leading-[20px] whitespace-nowrap">{q}</div>
                    </th>
                  ))}
                </tr>
              </thead>
              <tbody>
                {series.map((s, r) => (
                  <tr key={s.name}>
                    <th scope="row" className={headCell}>
                      <div className="flex h-[17px] items-center justify-between pr-[3px] pl-[15px]">{r + 1}<SeriesMark s={s} /></div>
                    </th>
                    <td className="h-[18px] border-r border-b border-r-black border-b-[#808080] p-0 align-top text-[15px]">
                      <div className="h-[17px] pl-0.5 leading-[20px]">{s.name}</div>
                    </td>
                    {s.values.map((v, c) => (
                      <td
                        key={c}
                        onClick={() => setActive(`${r}-${c}`)}
                        className={clsx('h-[18px] border-r border-b border-[#808080] p-0 text-right align-top', active === `${r}-${c}` && 'outline-2 -outline-offset-1 outline-black')}
                      >
                        <div className="h-[17px] pr-[3px] leading-[22px]">{v}</div>
                      </td>
                    ))}
                    <td className="border-b border-[#808080]" />
                  </tr>
                ))}
                {['4', ''].map((n) => (
                  <tr key={n}>
                    <th scope="row" className="h-[18px] border-r border-b border-black bg-[#d4d0c8] p-0 pl-[15px] text-left align-top font-normal">
                      <div className="h-[17px] leading-[20px]">{n}</div>
                    </th>
                    <td className="border-r border-b border-r-black border-b-[#808080]" />
                    {quarters.map((q) => <td key={q} className="border-r border-b border-[#808080]" />)}
                    <td className="border-b border-[#808080]" />
                  </tr>
                ))}
              </tbody>
            </table>
          </div>
          <div className={clsx('flex w-4 flex-col', dither)}>
            <ScrollButton dir="up" />
            <div className={clsx('h-[65px]', bevel)} />
            <span className="flex-1" />
            <ScrollButton dir="down" />
          </div>
        </div>
        <div className={clsx('flex h-4', dither)}>
          <ScrollButton dir="left" />
          <div className={clsx('w-[394px]', bevel)} />
          <span className="flex-1" />
          <ScrollButton dir="right" />
          <svg width="16" height="16" className="bg-[#d4d0c8]" stroke="#808080" shapeRendering="crispEdges">
            <path d="M5 15L15 5M9 15l6-6M13 15l2-2" strokeWidth="2" />
          </svg>
        </div>
      </div>
    </section>
  );
};

const palette = [
  'select', 'lasso', 'selectAdd', 'editPts', 'line', 'arrow', 'cross', 'bezier', 'polyBand', 'arc',
  'openArc', 'pie', 'blob', 'dimH', 'dimV', 'angle', 'dimD', 'leader', 'callout', 'calloutR',
  'cloud', 'brush', 'brushFill', 'polyOpen', 'ribbon', 'ellipse', 'circ', 'rect', 'square', 'rrect',
  'fish', 'sCurve', 'textTool', 'picText', 'globe', 'picture', 'table', 'del',
];

export default function App() {
  return (
    <div className="flex h-screen min-h-[700px] flex-col overflow-hidden border border-t-[#d4d0c8] border-l-[#d4d0c8] border-r-[#404040] border-b-[#404040] bg-[#d4d0c8] p-[3px] pb-0.5 font-['DejaVu_Sans_Mono','Noto_Sans_CJK_SC',monospace] text-[12px] text-black shadow-[inset_1px_1px_#fff,inset_-1px_-1px_#808080]">
      <TitleBar
        title="VisioApp - [VisioA1]"
        icon={
          <svg width="16" height="16" viewBox="0 0 16 16" shapeRendering="crispEdges" className="bg-black">
            <path d="M7.500 3v4M3 12l4-4M12 12L8 8M4 9l3-2M11 9L9 7" stroke="#fff" />
            <path d="M6 1h4v3H6zM5 7h5v3H5z" fill="#fff" />
            <path d="M1 10h3v5M12 10h3v2h-3v3h3" stroke="#0ff" fill="none" strokeWidth="2" />
            <path d="M0 0h4v2H0zM12 2h4v4h-2z" fill="#000080" />
          </svg>
        }
      >
        <WinButton kind="minimize" />
        <WinButton kind="maximize" />
        <span className="w-0.5" />
        <WinButton kind="close" />
      </TitleBar>
      <MenuBar />
      <div className="h-0.5 shrink-0 border-t border-[#808080] bg-white" />

      <div className="flex shrink-0">
        <Toolbar label="标准" height="h-[29px]">
          <ToolButton name="new" />
          <DropButton />
          <ToolButton name="open" />
          <DropButton />
          <ToolButton name="save" />
          <ToolButton name="undo" />
          <DropButton />
          <ToolButton name="redo" />
          <DropButton gray />
          {many(['cut', 'copy', 'paste', 'folderWin', 'stamp', 'ruler', 'plus', 'minus', 'left', 'right', 'print', 'mail', 'help'])}
        </Toolbar>
      </div>
      <div className="flex shrink-0 gap-px">
        <Toolbar label="连接线">
          {many(['c1', 'c2', 'c3', 'c4', 'c5', 'c6', 'c7', 'c8', 'c9', 'c10', 'c11', 'c12', 'c13', 'c14'])}
        </Toolbar>
        <Toolbar label="形状运算">
          {many(['xor', 'union', 'meet', 'common', 'subtract', 'curveIn', 'polyIn', 'addPt', 'delPt', 'toLine', 'toCurve', 'insL', 'insR', 'trim', 'closeShape'])}
        </Toolbar>
      </div>
      <div className="flex shrink-0">
        <Toolbar label="视图">
          {many(
            ['design', 'pick', 'grid', 'origin', 'snapGrid', 'guide', 'redBox', 'redTri', 'boxHit', 'frame', 'target', 'lensRed', 'treeG', 'gridG', 'hand', 'props'],
            ['design', 'grid', 'origin', 'snapGrid', 'guide', 'redBox', 'redTri', 'boxHit', 'frame', 'target']
          )}
          <Combo label="图层" value="{No Layer}" width="w-[84px]" />
          {many(['layers', 'layerProps', 'zoomOut', 'zoomIn'])}
          <Combo label="缩放" value="100" width="w-[60px]" />
          {many(['zoomReal', 'zoomPage', 'zoomWidth', 'zoomSel', 'zoomArea'], ['zoomReal'])}
          <span className="flex h-[22px] w-[23px] items-center justify-center">
            <svg width="16" height="16" viewBox="0 0 16 16" stroke="#000" fill="none" shapeRendering="crispEdges">
              <path d="M0 5l9 8M0 13l8-7" strokeDasharray="2 1" />
              <path d="M7 1l2 2-2 2M9 1l2 2-2 2M12 1l2 2-2 2M14 1l2 2-2 2" />
              <path d="M10 11h5l-2.500 3z" fill="#000" stroke="none" />
            </svg>
          </span>
        </Toolbar>
      </div>
      <div className="flex shrink-0">
        <Toolbar label="格式" height="h-[29px]">
          <Combo label="字体名称" value="Tahoma" width="w-[149px]" />
          <Combo label="字体大小" value="10" width="w-[41px]" />
          {many(['bold', 'italic', 'underline', 'alignL', 'alignC', 'alignR', 'vTop', 'vMid', 'vBot', 'bullets', 'grow', 'shrink'], ['alignC', 'vMid'])}
          {['fontColor', 'pen', 'bucket', 'lineW', 'dashes'].map((n) => (
            <span key={n} className="flex"><ToolButton name={n} /><DropButton /></span>
          ))}
        </Toolbar>
      </div>

      <main className="flex min-h-0 flex-1">
        <div className="relative flex min-w-0 flex-1 flex-col">
          <FlatBar />
          <div className="mt-px ml-px flex min-h-0 flex-1 border-t-2 border-l-2 border-[#606060]">
            <div className="flex min-w-0 flex-1 flex-col">
              <div className="flex shrink-0">
                <svg width="21" height="22" className="shrink-0 bg-[#dce2e2]" fill="none" shapeRendering="crispEdges">
                  <path d="M.5 .5h20v21h-20z" stroke="#000" />
                  <path d="M1 10.500h19M10.500 1v20" stroke="#00f" strokeDasharray="3 2" />
                </svg>
                <div className="min-w-0 flex-1"><RulerH /></div>
              </div>
              <div className="flex min-h-0 flex-1">
                <div className="relative w-[21px] shrink-0 overflow-hidden"><RulerV /></div>
                <div className="relative min-w-0 flex-1 overflow-hidden bg-white bg-[conic-gradient(from_270deg_at_1px_1px,#000_90deg,transparent_0)] bg-[length:12px_12px] bg-[position:11px_11px]">
                  <div className="absolute top-[5px] left-0 h-px w-full bg-[repeating-linear-gradient(90deg,#00f_0_3px,transparent_3px_6px)]" />
                  <div className="absolute top-0 left-[5px] h-full w-px bg-[repeating-linear-gradient(#00f_0_3px,transparent_3px_6px)]" />
                  <Chart />
                </div>
              </div>
            </div>
            <div className={clsx('flex w-4 shrink-0 flex-col', dither)}>
              <ScrollButton dir="up" />
              <div className={clsx('h-[159px]', bevel)} />
              <span className="flex-1" />
              <ScrollButton dir="down" />
            </div>
          </div>
          <div className="flex h-4 shrink-0">
            <div className="flex w-[66px] items-center justify-between border-r border-black px-1 text-[#606060]">
              <button type="button" aria-label="first page" className="flex h-[7px] border-l border-[#606060]"><Caret dir="left" /></button>
              <button type="button" aria-label="previous page"><Caret dir="left" /></button>
              <button type="button" aria-label="next page"><Caret dir="right" /></button>
              <button type="button" aria-label="last page" className="flex h-[7px] border-r border-[#606060]"><Caret dir="right" /></button>
            </div>
            <button type="button" className="ml-0.5 h-[15px] w-[72px] bg-black [clip-path:polygon(0_0,100%_0,94%_100%,8%_100%)]">
              <span className="flex h-[14px] items-center justify-center bg-white pt-[3px] font-['Liberation_Mono','Noto_Sans_CJK_SC',monospace] text-[13px] leading-[14px] font-bold whitespace-pre [clip-path:polygon(3%_0,98%_0,92%_100%,10%_100%)]">页面  0</span>
            </button>
            <span className="flex-1" />
            <div className={clsx('flex w-[333px]', dither)}>
              <span className={clsx('w-[3px]', bevel)} />
              <ScrollButton dir="left" />
              <div className={clsx('w-[266px]', bevel)} />
              <span className="flex-1" />
              <ScrollButton dir="right" />
            </div>
            <span className="w-4 shrink-0" />
          </div>
          <DataSheet />
        </div>

        <aside className="ml-px w-[54px] shrink-0 border-t border-r border-l border-t-[#808080] border-r-[#808080] border-l-white">
          <div className="bg-linear-to-r from-white to-[#c9c5b9] pt-[5px] pr-1 pb-[11px] pl-0.5">
            <div className="mx-px mb-[4px] h-[3px] w-[43px] bg-[linear-gradient(90deg,#808080_3px,transparent_0)] bg-[length:5px_2px] bg-repeat-x" />
            <div className="grid w-[46px] grid-cols-2 bg-[linear-gradient(90deg,#fafaf9,#cfcbc1)] bg-[length:23px_100%]">
              {many(palette, ['select'])}
            </div>
          </div>
        </aside>
      </main>

      <div className="flex shrink-0 border-t border-white">
        <div role="toolbar" aria-label="操作" className="flex h-[50px] items-center bg-linear-to-b from-white via-[#ebe9e4] to-[#c9c5b9] pr-[7px]">
          <span className="mx-1 h-[38px] w-[3px] shrink-0 bg-[linear-gradient(#808080_3px,transparent_0)] bg-[length:2px_5px] bg-repeat-y" />
          <div>
            <div className="flex w-fit bg-linear-to-b from-[#fafaf9] to-[#d3cfc6]">
              {many(['rotate', 'skew', 'flipRot', 'rotL', 'rotR', 'flipH', 'flipV', 'group', 'ungroup', 'lock', 'unlock', 'aL', 'aT', 'aB', 'aR', 'aM', 'aC', 'cH'], ['rotate', 'unlock'])}
            </div>
            <div className="flex w-fit bg-linear-to-b from-[#fafaf9] to-[#d3cfc6]">
              {many(['cV', 'spH', 'spV', 'sameW', 'sameH', 'sameWH', 'front', 'back', 'fwd', 'bwd', 'over', 'under', 'swap', 'nL', 'nR', 'nU', 'nD'])}
            </div>
          </div>
        </div>
      </div>

      <footer className="flex h-6 shrink-0 items-center border-t border-[#808080] pt-0.5">
        <span className="flex-1 pl-0.5">移动组件</span>
        <span className="flex h-[19px] w-[302px] items-center border border-t-[#b8b4ac] border-l-[#b8b4ac] border-r-white border-b-white pl-[3px]">
          <span className="text-[10px]">(</span>鼠标<span className="text-[10px]">:17.01cm,10.00cm)</span>
        </span>
        <span className="flex h-[19px] w-[212px] items-center border border-t-[#b8b4ac] border-l-[#b8b4ac] border-r-white border-b-white pl-[3px]">
          <span className="text-[10px]">(</span>位置<span className="text-[10px]">:2.86cm,1.90cm)</span>
        </span>
      </footer>
    </div>
  );
}
